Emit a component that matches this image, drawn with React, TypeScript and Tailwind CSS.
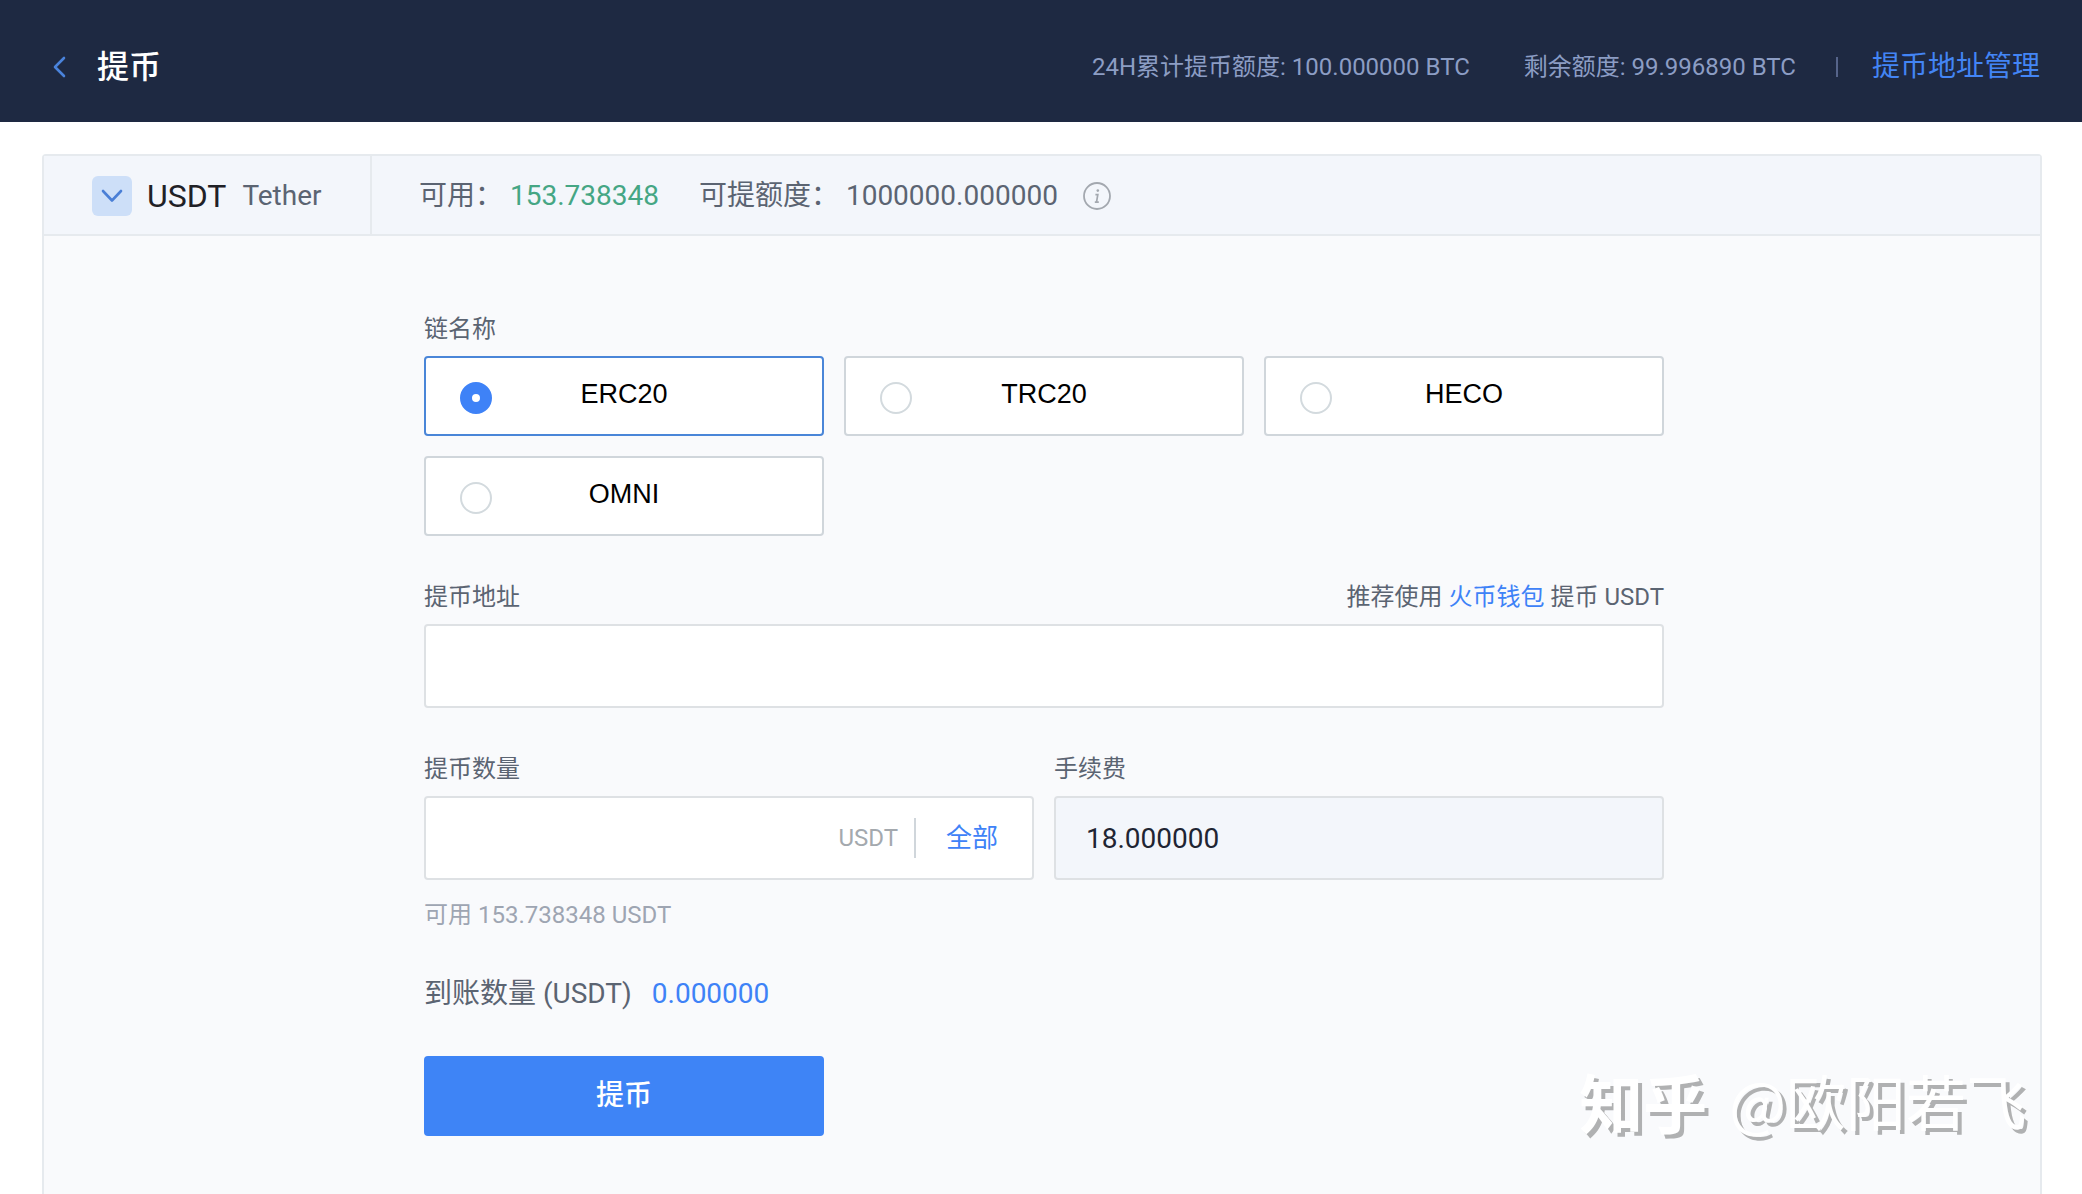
import { useState } from 'react';

const CHAINS = ['ERC20', 'TRC20', 'HECO', 'OMNI'];

const AVAILABLE = '153.738348';

function BackIcon() {
  return (
    <svg width="14" height="22" viewBox="0 0 14 22" fill="none" aria-hidden="true">
      <path d="M12 2L3 11l9 9" stroke="#4a83dc" strokeWidth="2.6" strokeLinecap="round" strokeLinejoin="round" />
    </svg>
  );
}

function ChevronDownIcon() {
  return (
    <svg width="22" height="14" viewBox="0 0 22 14" fill="none" aria-hidden="true">
      <path d="M2 2l9 9.5L20 2" stroke="#4a7fd6" strokeWidth="2.6" strokeLinecap="round" strokeLinejoin="round" />
    </svg>
  );
}

function InfoIcon() {
  return (
    <svg width="28" height="28" viewBox="0 0 28 28" fill="none" aria-hidden="true">
      <circle cx="14" cy="14" r="13" stroke="#a3a8af" strokeWidth="1.8" />
      <circle cx="14.8" cy="8.6" r="1.3" fill="#a3a8af" />
      <path d="M12.4 12.6h2.4l-1.2 7M11.8 20.2h4" stroke="#a3a8af" strokeWidth="1.7" />
    </svg>
  );
}

export default function App() {
  const [chain, setChain] = useState('ERC20');
  const [address, setAddress] = useState('');
  const [amount, setAmount] = useState('');

  return (
    <div
      lang="zh-CN"
      className="relative flex min-h-screen flex-col bg-white font-[Roboto,'Noto_Sans_CJK_SC',sans-serif] text-[#5b6472]"
    >
      {/* Top bar */}
      <header className="flex h-[122px] items-center bg-[#1e2942] pt-[12px] pr-[42px] pl-[52px]">
        <a href="#back" aria-label="返回">
          <BackIcon />
        </a>
        <h1 className="ml-[31px] text-[32px] leading-[44px] font-medium text-white">提币</h1>
        <div className="ml-auto flex items-center text-[24px] leading-[36px] text-[#8c9dc4]">
          <span>24H累计提币额度: 100.000000 BTC</span>
          <span className="ml-[54px]">剩余额度: 99.996890 BTC</span>
          <span className="ml-[40px] h-[20px] w-[2px] bg-[#56648a]" />
          <a href="#addresses" className="ml-[34px] text-[28px] text-[#4385f5]">
            提币地址管理
          </a>
        </div>
      </header>

      {/* Panel */}
      <main className="mt-[32px] mr-[40px] ml-[42px] flex flex-1 flex-col rounded-t-sm border-2 border-b-0 border-[#e6eaee] bg-[#f9fafc]">
        <div className="flex h-[80px] border-b-2 border-[#e6eaee] bg-[#f3f6fb] text-[28px]">
          <div className="flex w-[328px] items-center border-r-2 border-[#e6eaee] pt-[2px] pl-[48px]">
            <button
              type="button"
              aria-label="选择币种"
              className="flex h-[40px] w-[40px] items-center justify-center rounded-md bg-[#cddff8]"
            >
              <ChevronDownIcon />
            </button>
            <span className="ml-[15px] text-[32px] text-[#1f2126]">USDT</span>
            <span className="ml-[16px]">Tether</span>
          </div>
          <div className="flex items-center pt-[2px] pl-[47px]">
            <span>
              可用： <span className="text-[#45a684]">{AVAILABLE}</span>
            </span>
            <span className="ml-[40px]">可提额度： 1000000.000000</span>
            <button type="button" aria-label="额度说明" className="ml-[25px]">
              <InfoIcon />
            </button>
          </div>
        </div>

        <div className="pl-[4px]">
          <form
            className="mx-auto max-w-[1240px] pt-[75px] pb-[56px] text-[24px] leading-[36px]"
            onSubmit={(e) => e.preventDefault()}
          >
            {/* Chain */}
            <fieldset>
              <legend className="pb-[9px]">链名称</legend>
              <div className="grid grid-cols-3 gap-[20px]">
                {CHAINS.map((name) => (
                  <label
                    key={name}
                    className="flex h-[80px] items-center rounded border-2 border-[#d0d6db] bg-white pr-[66px] pl-[34px] has-checked:border-[#4a86d8]"
                  >
                    <input
                      type="radio"
                      name="chain"
                      value={name}
                      checked={chain === name}
                      onChange={() => setChain(name)}
                      className="mt-[4px] h-[32px] w-[32px] shrink-0 appearance-none rounded-full border-2 border-[#d3dade] bg-white checked:border-[12px] checked:border-[#3e82f7]"
                    />
                    <span className="flex-1 pb-[4px] text-center font-['Liberation_Sans',sans-serif] text-[27px] text-black">
                      {name}
                    </span>
                  </label>
                ))}
              </div>
            </fieldset>

            {/* Address */}
            <div className="mt-[43px] flex justify-between">
              <label htmlFor="address">提币地址</label>
              <p>
                推荐使用{' '}
                <a href="#wallet" className="text-[#3e82f7]">
                  火币钱包
                </a>{' '}
                提币 USDT
              </p>
            </div>
            <input
              id="address"
              type="text"
              value={address}
              onChange={(e) => setAddress(e.target.value)}
              className="mt-[9px] block h-[84px] w-full rounded border-2 border-[#dee1e4] bg-white px-[32px] text-[28px] text-[#1f2533]"
            />

            {/* Amount and fee */}
            <div className="mt-[43px] grid grid-cols-2 gap-[20px]">
              <div>
                <label htmlFor="amount">提币数量</label>
                <div className="mt-[9px] flex h-[84px] items-center rounded border-2 border-[#dee1e4] bg-white pr-[34px]">
                  <input
                    id="amount"
                    type="text"
                    value={amount}
                    onChange={(e) => setAmount(e.target.value)}
                    className="h-full min-w-0 flex-1 pl-[32px] text-[28px] text-[#1f2533]"
                  />
                  <span className="text-[#a4a9ae]">USDT</span>
                  <span className="ml-[16px] h-[40px] w-[2px] bg-[#d0d6db]" />
                  <button
                    type="button"
                    onClick={() => setAmount(AVAILABLE)}
                    className="ml-[30px] text-[26px] text-[#3e82f7]"
                  >
                    全部
                  </button>
                </div>
              </div>
              <div>
                <label htmlFor="fee">手续费</label>
                <input
                  id="fee"
                  type="text"
                  readOnly
                  value="18.000000"
                  className="mt-[9px] block h-[84px] w-full rounded border-2 border-[#dee1e4] bg-[#f3f6fb] px-[30px] text-[28px] text-[#1f2533]"
                />
              </div>
            </div>
            <p className="mt-[17px] text-[#9ea5b2]">可用 {AVAILABLE} USDT</p>

            <p className="mt-[41px] text-[28px] leading-[40px]">
              到账数量 (USDT)
              <span className="ml-[20px] text-[#3e82f7]">0.000000</span>
            </p>

            <button
              type="submit"
              className="mt-[42px] block h-[80px] w-[400px] rounded bg-[#3e84f6] text-[28px] font-medium text-white"
            >
              提币
            </button>
          </form>
        </div>
      </main>

      {/* Watermark */}
      <div className="pointer-events-none absolute right-[56px] bottom-[52px] flex items-center gap-[22px] font-['Noto_Sans_CJK_SC',sans-serif] text-[60px] leading-[84px] whitespace-nowrap text-white [text-shadow:4px_4px_0_#b0b1b2]">
        <span className="text-[64px] font-bold">知乎</span>
        <span>@欧阳若飞</span>
      </div>
    </div>
  );
}
